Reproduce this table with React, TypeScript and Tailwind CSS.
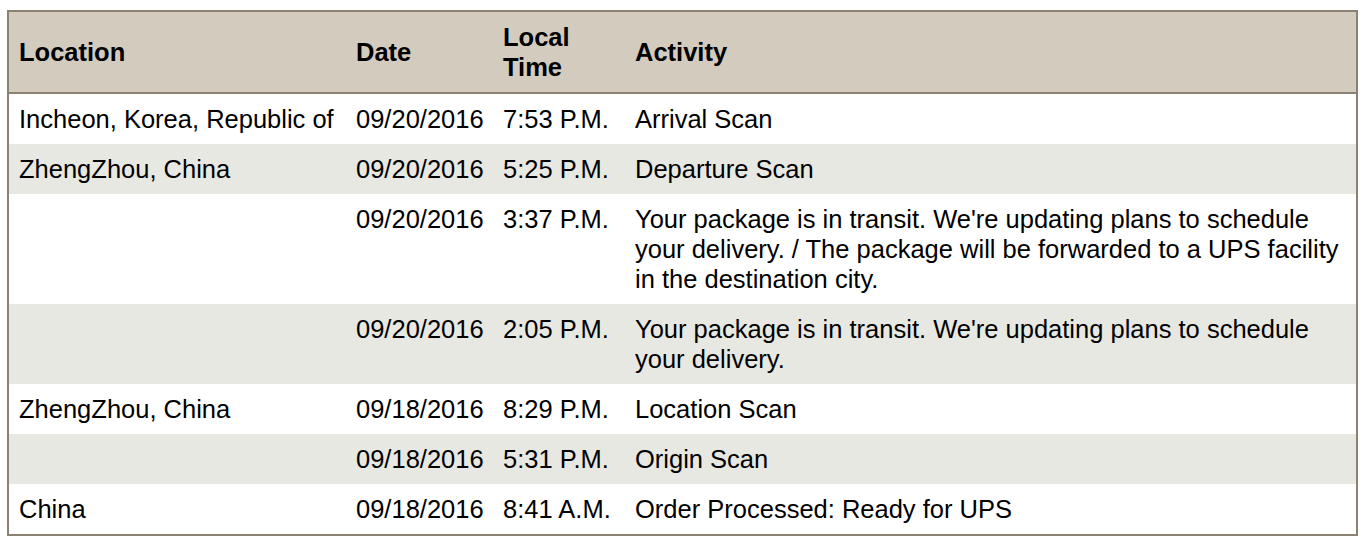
const rows = [
  { location: "Incheon, Korea, Republic of", date: "09/20/2016", time: "7:53 P.M.", activity: "Arrival Scan" },
  { location: "ZhengZhou, China", date: "09/20/2016", time: "5:25 P.M.", activity: "Departure Scan" },
  {
    location: "",
    date: "09/20/2016",
    time: "3:37 P.M.",
    activity:
      "Your package is in transit. We're updating plans to schedule your delivery. / The package will be forwarded to a UPS facility in the destination city.",
  },
  {
    location: "",
    date: "09/20/2016",
    time: "2:05 P.M.",
    activity: "Your package is in transit. We're updating plans to schedule your delivery.",
  },
  { location: "ZhengZhou, China", date: "09/18/2016", time: "8:29 P.M.", activity: "Location Scan" },
  { location: "", date: "09/18/2016", time: "5:31 P.M.", activity: "Origin Scan" },
  { location: "China", date: "09/18/2016", time: "8:41 A.M.", activity: "Order Processed: Ready for UPS" },
];

export default function App() {
  return (
    <div className="min-h-[546px] bg-white px-[7px] pt-[10px] font-['Liberation_Sans',Arial,sans-serif] text-[25.5px] leading-[30px] text-black">
      <table className="w-[1351px] table-fixed border-collapse border-2 border-[#8b8273]">
        <colgroup>
          <col className="w-[338px]" />
          <col className="w-[147px]" />
          <col className="w-[132px]" />
          <col />
        </colgroup>
        {/* Header */}
        <thead>
          <tr className="border-b-2 border-[#8b8273] bg-[#d3cbbe] text-left font-bold">
            <th className="px-[10px] py-[10px] align-middle">Location</th>
            <th className="px-[10px] py-[10px] align-middle">Date</th>
            <th className="px-[10px] py-[10px] align-middle">Local Time</th>
            <th className="px-[10px] py-[10px] align-middle">Activity</th>
          </tr>
        </thead>
        {/* Rows */}
        <tbody>
          {rows.map((row, index) => (
            <tr key={index} className={index % 2 === 1 ? "bg-[#e8e8e3]" : "bg-white"}>
              <td className="py-[10px] pl-[10px] pr-0 align-top whitespace-nowrap">{row.location}</td>
              <td className="px-[10px] py-[10px] align-top whitespace-nowrap">{row.date}</td>
              <td className="px-[10px] py-[10px] align-top whitespace-nowrap">{row.time}</td>
              <td className="py-[10px] pl-[10px] pr-[4px] align-top">{row.activity}</td>
            </tr>
          ))}
        </tbody>
      </table>
    </div>
  );
}
